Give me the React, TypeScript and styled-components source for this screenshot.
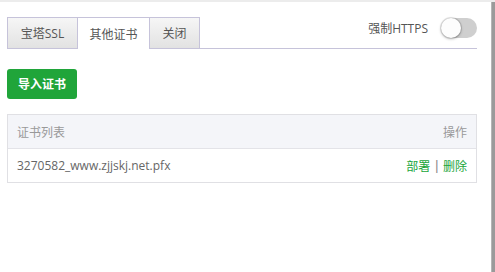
import React, { useState } from 'react';
import styled, { createGlobalStyle } from 'styled-components';

const GlobalStyle = createGlobalStyle`
    html, body {
        margin: 0;
        padding: 0;
        background: #fff;
    }
    body {
        font-family: "Open Sans", "Noto Sans CJK SC", sans-serif;
        font-size: 12px;
        color: #555;
    }
`

const Page = styled.div`
    display: flex;
    width: 495px;
    height: 272px;
    border-top: 2px solid #ececec;
    box-sizing: border-box;
`

const Panel = styled.div`
    flex: 1;
    padding: 15px 14px 0 7px;
`

const ScrollStrip = styled.div`
    width: 4px;
    background: #9a9a9a;
    border-left: 1px solid #b5b5b5;
    box-sizing: border-box;
`

const TabBar = styled.div`
    display: flex;
    align-items: stretch;
    height: 31px;
    border-bottom: 1px solid #c6c3da;
`

const Tab = styled.div<{ active?: boolean; width: number }>`
    display: flex;
    align-items: center;
    justify-content: center;
    width: ${p => p.width}px;
    margin-right: -1px;
    border: 1px solid #c6c3da;
    border-bottom: none;
    box-sizing: border-box;
    background: ${p => p.active ? '#fff' : 'linear-gradient(#f6f6f6, #e2e2e2)'};
    margin-bottom: ${p => p.active ? '-1px' : '0'};
    color: #555;
    font-size: 12px;
    cursor: pointer;
`

const Spacer = styled.div`
    flex: 1;
`

const ForceHttps = styled.div`
    display: flex;
    align-items: center;
    gap: 13px;
    padding-bottom: 9px;
    color: #555;
    font-size: 12px;
`

const Switch = styled.div<{ on: boolean }>`
    position: relative;
    width: 36px;
    height: 20px;
    border-radius: 10px;
    background: ${p => p.on ? '#20a53a' : '#cfcfcf'};
    cursor: pointer;
`

const Knob = styled.span<{ on: boolean }>`
    position: absolute;
    top: 0;
    left: ${p => p.on ? '16px' : '0'};
    width: 20px;
    height: 20px;
    border-radius: 50%;
    background: #fdfdfd;
    box-shadow: 0 0 0 1px rgba(0, 0, 0, 0.1), 0 1px 3px rgba(0, 0, 0, 0.3);
`

const ImportButton = styled.button`
    display: block;
    margin-top: 20px;
    width: 70px;
    height: 30px;
    border: none;
    border-radius: 3px;
    background: #20a53a;
    color: #fff;
    font-family: "Open Sans", "Noto Sans CJK SC", sans-serif;
    font-size: 12px;
    font-weight: 600;
    cursor: pointer;
`

const Table = styled.div`
    margin-top: 15px;
    border: 1px solid #e0e0e4;
`

const Row = styled.div<{ head?: boolean }>`
    display: flex;
    align-items: center;
    justify-content: space-between;
    height: 33px;
    padding: 0 9px 0 9px;
    background: ${p => p.head ? '#f4f5f9' : '#fff'};
    color: ${p => p.head ? '#999' : '#666'};
    border-top: ${p => p.head ? 'none' : '1px solid #e3e3e8'};
    font-size: 12px;
`

const Actions = styled.div`
    display: flex;
    align-items: center;
    gap: 3px;
`

const Link = styled.a`
    color: #20a53a;
    text-decoration: none;
    cursor: pointer;
`

const Sep = styled.span`
    color: #888;
    font-weight: 600;
`

export default function App() {
    const [tab, setTab] = useState(1);
    const [https, setHttps] = useState(false);
    const tabs = [
        { label: '宝塔SSL', width: 71 },
        { label: '其他证书', width: 73 },
        { label: '关闭', width: 51 },
    ];

    return (
        <>
            <GlobalStyle />
            <Page>
                <Panel>
                    <TabBar>
                        {tabs.map((t, i) => (
                            <Tab key={t.label} width={t.width} active={tab === i} onClick={() => setTab(i)}>
                                {t.label}
                            </Tab>
                        ))}
                        <Spacer />
                        <ForceHttps>
                            强制HTTPS
                            <Switch on={https} onClick={() => setHttps(!https)}>
                                <Knob on={https} />
                            </Switch>
                        </ForceHttps>
                    </TabBar>

                    <ImportButton>导入证书</ImportButton>

                    <Table>
                        <Row head>
                            <span>证书列表</span>
                            <span>操作</span>
                        </Row>
                        <Row>
                            <span>3270582_www.zjjskj.net.pfx</span>
                            <Actions>
                                <Link>部署</Link>
                                <Sep>|</Sep>
                                <Link>删除</Link>
                            </Actions>
                        </Row>
                    </Table>
                </Panel>
                <ScrollStrip />
            </Page>
        </>
    );
}
